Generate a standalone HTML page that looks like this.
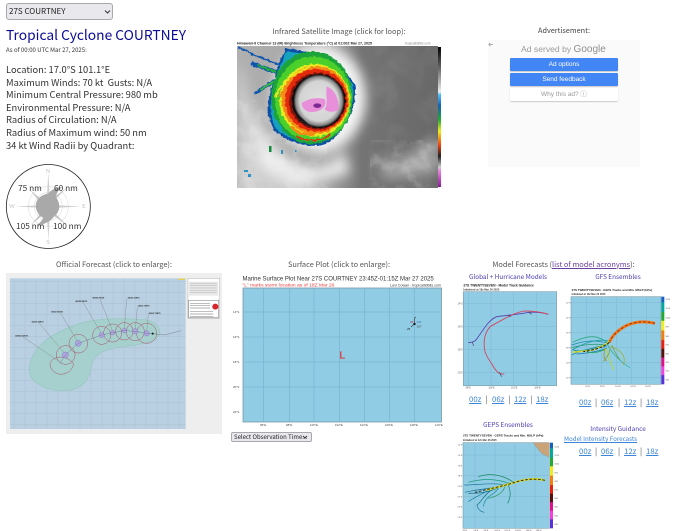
<!DOCTYPE html>
<html lang="en"><head><meta charset="utf-8"><title>Tropical Cyclone COURTNEY</title>
<style>
html,body{margin:0;padding:0;background:#fff;width:700px;height:531px;overflow:hidden}
#w{position:absolute;left:0;top:0;width:700px;height:531px;filter:blur(.3px);font-family:"Noto Sans CJK JP","Liberation Sans",sans-serif;color:#333}
.t{position:absolute;white-space:nowrap;line-height:1}
.c{transform:translateX(-50%)}
.h{font-size:7.400px;color:#555}
.m{font-size:6.400px;color:#4a3fb5}
a{color:#3d85d8;text-decoration:underline}
.l{font-size:7.800px;color:#3d85d8}
.sep{position:absolute;color:#555;font-size:7.800px;line-height:1}
svg{position:absolute;left:0;top:0;overflow:visible}
.box{position:absolute}
.info{position:absolute;left:6px;top:63px;font-size:9.350px;line-height:12.600px;color:#333;white-space:pre}
.btn{position:absolute;left:510px;width:108px;height:13px;border-radius:1px;font:6.500px/13px "Liberation Sans",sans-serif;text-align:center;box-shadow:0 1px 1px rgba(0,0,0,.2)}
select{position:absolute;appearance:none;-webkit-appearance:none;background:#e9e9ed;border:1px solid #a8a8ad;border-radius:3px;color:#222;padding:0 0 0 2px;margin:0;font-family:"Noto Sans CJK JP","Liberation Sans",sans-serif}
.n{font-size:8.300px;color:#333}
</style></head>
<body><div id="w">
<select style="left:6px;top:3px;width:107px;height:17px;font-size:8px"><option>27S COURTNEY</option></select>
<svg width="700" height="531" style="z-index:2;pointer-events:none"><path d="M105 10.500l2.500 2.500 2.500-2.500M303 436l2 2 2-2" fill="none" stroke="#333" stroke-width="1"/></svg>

<div class="t" style="left:6px;top:28px;font-size:13.800px;color:#0b0b96">Tropical Cyclone COURTNEY</div>
<div class="t" style="left:6px;top:47px;font-size:6px;color:#333">As of 00:00 UTC Mar 27, 2025:</div>
<div class="info">Location: 17.0°S 101.1°E
Maximum Winds: 70 kt  Gusts: N/A
Minimum Central Pressure: 980 mb
Environmental Pressure: N/A
Radius of Circulation: N/A
Radius of Maximum wind: 50 nm
34 kt Wind Radii by Quadrant:</div>

<!-- compass -->
<svg width="700" height="531">
 <g transform="translate(5,161.500) scale(.3333)">
  <g fill="none" stroke="#e2e2e2" stroke-width="2"><circle cx="130" cy="135" r="60"/><circle cx="130" cy="135" r="42"/></g>
  <g fill="#cfcfcf">
   <path d="M130 32l5 86h-10zM130 238l5-88h-10zM30 135l82-4v8zM230 135l-82-4v8z"/>
   <path d="M75 85l45 38-8 8zM185 80l-45 45-8-8zM78 190l40-48 8 8zM185 190l-45-44-6 8z" fill="#c4c4c4"/>
  </g>
  <path d="M130 96C140 84 152 78 172 76C162 84 156 92 152 106C166 122 168 150 148 164C138 178 124 188 94 192C108 182 114 174 114 168C92 158 86 126 100 112C108 102 120 98 130 96Z" fill="#a9a9a9"/>
  <circle cx="130" cy="135" r="126" fill="none" stroke="#222" stroke-width="2.400"/>
 </g>
 <g font-family="'Liberation Serif',serif" fill="#c0c0c0" font-size="6.500" text-anchor="middle">
  <text x="48" y="173">N</text><text x="48" y="244">S</text><text x="12" y="208">W</text><text x="84" y="208">E</text>
 </g>
</svg>
<div class="t n" style="left:18px;top:184px">75 nm</div>
<div class="t n" style="left:54px;top:184px">60 nm</div>
<div class="t n" style="left:16px;top:221.500px">105 nm</div>
<div class="t n" style="left:53px;top:221.500px">100 nm</div>

<!-- satellite -->
<div class="t h c" style="left:339px;top:27.500px">Infrared Satellite Image (click for loop):</div>
<svg width="700" height="531">
 <defs>
  <clipPath id="sc"><rect x="237" y="46" width="201" height="142"/></clipPath>
  <linearGradient id="sbg" x1="0" x2="1" y1="0" y2="0"><stop offset="0" stop-color="#b0b0b0"/><stop offset=".45" stop-color="#a4a4a4"/><stop offset=".62" stop-color="#747474"/><stop offset="1" stop-color="#686868"/></linearGradient>
  <linearGradient id="cb" x1="0" x2="0" y1="0" y2="1"><stop offset="0" stop-color="#000"/><stop offset=".15" stop-color="#666"/><stop offset=".32" stop-color="#eee"/><stop offset=".34" stop-color="#4fc3f7"/><stop offset=".42" stop-color="#1560b0"/><stop offset=".52" stop-color="#22aa33"/><stop offset=".6" stop-color="#eeee22"/><stop offset=".7" stop-color="#ee4411"/><stop offset=".78" stop-color="#222"/><stop offset=".86" stop-color="#ccc"/><stop offset=".88" stop-color="#ee88dd"/><stop offset="1" stop-color="#8a1a9a"/></linearGradient>
  <radialGradient id="disc"><stop offset="0" stop-color="#e0e0e0"/><stop offset=".76" stop-color="#d4d4d4"/><stop offset=".92" stop-color="#888"/><stop offset="1" stop-color="#1a1a1a"/></radialGradient>
  <filter id="noise" x="0" y="0" width="100%" height="100%"><feTurbulence type="fractalNoise" baseFrequency=".07" numOctaves="4" seed="7"/><feColorMatrix values="0 0 0 0 1  0 0 0 0 1  0 0 0 0 1  3 0 0 0 -1.300"/></filter>
  <filter id="dark" x="0" y="0" width="100%" height="100%"><feTurbulence type="fractalNoise" baseFrequency=".04" numOctaves="3" seed="3"/><feColorMatrix values="0 0 0 0 .3  0 0 0 0 .3  0 0 0 0 .3  3 0 0 0 -1.300"/></filter>
  <filter id="jag" x="-10%" y="-10%" width="120%" height="120%"><feTurbulence type="fractalNoise" baseFrequency=".3" numOctaves="2" seed="11" result="n"/><feDisplacementMap in="SourceGraphic" in2="n" scale="3.500" xChannelSelector="R" yChannelSelector="G"/><feGaussianBlur stdDeviation=".3"/></filter>
  <filter id="b4"><feGaussianBlur stdDeviation="6"/></filter>
  <path id="bd" d="M165 25C260 30 350 80 375 135C385 200 345 270 300 305C250 330 190 315 135 275C105 230 110 170 135 115C140 70 160 50 165 25Z"/>
 </defs>
 <g clip-path="url(#sc)">
  <rect x="237" y="46" width="201" height="142" fill="url(#sbg)"/>
  <g filter="url(#b4)">
   <g transform="translate(230,40) scale(.3333)">
    <ellipse cx="268" cy="175" rx="140" ry="160" fill="#f4f4f4"/>
    <path d="M20 60C70 160 50 300 130 400L310 460H20Z" fill="#cfcfcf"/>
    <path d="M60 170C90 260 120 330 200 370C260 390 300 390 340 330L360 400L200 440L90 380Z" fill="#ececec"/>
    <path d="M440 385C500 360 580 320 625 290V400L470 420Z" fill="#a4a4a4"/>
   </g>
  </g>
  <rect x="368" y="46" width="70" height="142" filter="url(#dark)" opacity=".22"/>
  <rect x="237" y="100" width="90" height="88" filter="url(#noise)" opacity=".22"/>
  <rect x="370" y="140" width="68" height="48" filter="url(#noise)" opacity=".2"/>
  <g filter="url(#jag)">
   <g transform="translate(230,40) scale(.3333)" fill="none" stroke-linecap="round">
    <path d="M27 23L80 48L150 75" stroke="#0d55ad" stroke-width="6"/>
    <path d="M68 72L140 96" stroke="#0d55ad" stroke-width="12"/><path d="M85 77L140 96" stroke="#27b03a" stroke-width="6"/>
    <path d="M78 158L135 122" stroke="#0d55ad" stroke-width="11"/><path d="M95 147L135 122" stroke="#3cc42e" stroke-width="6"/>
    <use href="#bd" fill="#0c4fa5"/>
    <path d="M168 35C260 40 345 85 369 138C378 200 340 265 296 298C250 322 195 308 141 270C113 228 118 172 141 118C146 75 162 58 168 35Z" fill="#15a2bf"/>
    <ellipse cx="246" cy="173" rx="122" ry="139" fill="#1ca33a"/>
    <ellipse cx="250" cy="177" rx="115" ry="128" fill="#4ccf2a"/>
    <ellipse cx="254" cy="181" rx="106" ry="109" fill="#e8ea20"/>
    <ellipse cx="256" cy="180" rx="101" ry="102" fill="#f28c18"/>
    <path d="M135 172C150 130 190 100 240 82" stroke="#e8ea20" stroke-width="5"/>
    <path d="M150 170C165 135 195 112 235 96" stroke="#f28c18" stroke-width="5"/>
    <ellipse cx="259" cy="181" rx="94" ry="94" fill="#e42a10"/>
    <path d="M200 288C230 306 270 306 300 284" stroke="#e42a10" stroke-width="5"/>
    <path d="M185 262C205 282 225 285 250 282" stroke="#f28c18" stroke-width="9"/>
    <ellipse cx="263" cy="183" rx="85" ry="85" fill="#7a1208"/>
    <ellipse cx="266" cy="183" rx="80" ry="81" fill="#111"/>
   </g>
  </g>
  <g transform="translate(230,40) scale(.3333)" style="filter:blur(.4px)">
   <ellipse cx="267" cy="183" rx="76" ry="79" fill="url(#disc)"/>
   <path d="M195 205C205 230 225 238 236 255C222 258 205 240 195 205Z" fill="#1c1c1c"/>
   <path d="M290 140C312 145 330 180 325 210C310 218 292 216 284 208C296 190 286 165 290 140Z" fill="#e88fda"/>
   <path d="M215 190C232 176 262 170 285 178C292 200 272 216 244 216C228 216 216 204 215 190Z" fill="#e88fda"/>
   <ellipse cx="262" cy="197" rx="12" ry="7" fill="#7e2a92"/>
  </g>
  <g fill="#118a3a"><rect x="269" y="146" width="2.500" height="6"/></g>
  <g fill="#1a8fc4" opacity=".9"><rect x="244" y="170" width="4" height="2"/><rect x="248" y="174" width="3" height="3"/><rect x="281" y="150" width="2" height="4"/><rect x="295" y="150" width="1.500" height="2"/></g>
 </g>
 <rect x="438" y="47" width="3" height="140" fill="url(#cb)"/>
 <g font-family="'Liberation Sans',sans-serif" font-size="3.600" font-weight="700" fill="#222"><text x="237" y="44.300">Himawari-9 Channel 13 (IR) Brightness Temperature (°C) at 01:00Z Mar 27, 2025</text></g>
 <text x="405" y="44.300" font-family="'Liberation Sans',sans-serif" font-size="3.200" fill="#888">tropicaltidbits.com</text>
</svg>

<!-- ad -->
<div class="t h c" style="left:564px;top:27.500px;color:#444;font-size:7.300px">Advertisement:</div>
<div class="box" style="left:488px;top:40px;width:152px;height:127px;background:#fafafa"></div>
<svg width="700" height="531"><path d="M493 44.500h-4M490.500 42.800l-1.700 1.700 1.700 1.700" fill="none" stroke="#999" stroke-width=".7"/></svg>
<div class="t" style="left:521px;top:44px;font:8.600px 'Liberation Sans',sans-serif;color:#9b9b9b">Ad served by <span style="font-size:10px;color:#8f8f8f">Google</span></div>
<div class="btn" style="top:57.500px;background:#4285f4;color:#fff">Ad options</div>
<div class="btn" style="top:72.500px;background:#4285f4;color:#fff">Send feedback</div>
<div class="btn" style="top:87.500px;background:#fff;color:#999">Why this ad? ⓘ</div>

<!-- official forecast -->
<div class="t h c" style="left:114px;top:260.500px">Official Forecast (click to enlarge):</div>
<svg width="700" height="531">
 <rect x="6" y="273" width="216" height="161" fill="#eeeeee"/>
 <g transform="translate(0,255) scale(.3333)">
  <rect x="30" y="70" width="527" height="452" fill="#b9d0e2"/>
  <g stroke="#8fa2b2" stroke-width="1.300" opacity=".35">
   <path d="M42 70V522M75 70V522M108 70V522M141 70V522M174 70V522M207 70V522M240 70V522M273 70V522M306 70V522M339 70V522M372 70V522M405 70V522M438 70V522M471 70V522M504 70V522M537 70V522"/>
   <path d="M30 80H557M30 113H557M30 146H557M30 179H557M30 212H557M30 245H557M30 278H557M30 311H557M30 344H557M30 377H557M30 410H557M30 443H557M30 476H557M30 509H557"/>
  </g>
  <path d="M480 235C478 205 455 195 420 193C370 190 310 190 270 198C225 208 175 225 130 262C95 295 80 330 92 365C115 400 165 412 210 406C255 396 272 365 275 330C280 300 310 285 350 278C400 270 470 268 480 235Z" fill="#a6d0cd" stroke="#97c6c2" stroke-width="2"/>
  <g fill="none" stroke="#a84f64" stroke-width="1.500">
   <circle cx="440" cy="235" r="30"/><circle cx="406" cy="230" r="27"/><circle cx="373" cy="229" r="26"/><circle cx="338" cy="234" r="27"/><circle cx="305" cy="241" r="27"/>
   <circle cx="235" cy="266" r="28"/><circle cx="197" cy="300" r="28"/><path d="M150 325C160 300 200 300 220 325C220 345 200 358 180 358C165 355 150 345 150 325Z"/>
  </g>
  <g fill="#b0a6de" stroke="#7a6dc8" stroke-width="1.200"><circle cx="440" cy="235" r="8"/><circle cx="406" cy="229" r="8"/><circle cx="373" cy="227" r="7"/><circle cx="338" cy="233" r="7"/><circle cx="305" cy="240" r="8"/><circle cx="235" cy="265" r="9"/><circle cx="196" cy="300" r="9"/></g>
  <path d="M544 227L495 240L458 236L440 235L406 229L373 227L338 233L305 240L235 265L196 300L180 325" fill="none" stroke="#667" stroke-width="1.100"/>
  <g stroke="#777" stroke-width="1" fill="none"><path d="M445 180L440 228M412 157L406 222M380 132L373 220M300 133L337 226M248 140L303 233M180 172L232 258M118 205L192 293M68 245L178 320"/></g>
  <g font-family="'Liberation Sans',sans-serif" font-size="5.500" fill="#222" font-weight="700">
   <text x="446" y="177">00/00Z 70KTS</text><text x="413" y="155">12/06Z 70KTS</text><text x="383" y="130">24/18Z 75KTS</text><text x="277" y="130">36/06Z 70KTS</text><text x="226" y="141">48/18Z 65KTS</text><text x="153" y="172">72/00Z 55KTS</text><text x="95" y="203">96/00Z 45KTS</text><text x="45" y="244">120/00Z 35KTS</text>
  </g>
  <rect x="535" y="71" width="20" height="4" fill="#ead04a"/>
  <circle cx="458" cy="236" r="3" fill="#111"/>
  <rect x="564" y="70" width="95" height="120" fill="#fff" stroke="#888"/>
  <rect x="567" y="80" width="88" height="42" fill="#e8e8e8"/>
  <path d="M570 85H650M570 92H650M570 99H650M570 106H650M570 113H650" stroke="#aaa" stroke-width="1.300"/>
  <rect x="566" y="136" width="90" height="52" fill="#fff" stroke="#333"/>
  <circle cx="646" cy="155" r="9" fill="#d8262a"/>
  <path d="M570 145H630M570 152H630M570 159H630M570 170H640M570 177H640M570 184H640" stroke="#999" stroke-width="2"/>
 </g>
</svg>

<!-- surface -->
<div class="t h c" style="left:339px;top:260.500px">Surface Plot (click to enlarge):</div>
<svg width="700" height="531">
 <text x="242.500" y="280.300" font-family="'Liberation Sans',sans-serif" font-size="6" fill="#333">Marine Surface Plot Near 27S COURTNEY 23:45Z-01:15Z Mar 27 2025</text>
 <text x="242.500" y="286.500" font-family="'Liberation Sans',sans-serif" font-size="4.950" fill="#f03c3c">"L" marks storm location as of 18Z Mar 26</text>
 <text x="441" y="286.500" text-anchor="end" font-family="'Liberation Sans',sans-serif" font-size="3.600" fill="#333">Levi Cowan - tropicaltidbits.com</text>
 <rect x="243" y="288" width="198.500" height="134" fill="#90cce4" stroke="#7b98a8" stroke-width=".8"/>
 <g stroke="#7db7d2" stroke-width=".8"><path d="M263.500 288V422M289.500 288V422M314 288V422M339.500 288V422M364.500 288V422M389.500 288V422M414.500 288V422"/><path d="M243 312H441M243 337H441M243 362H441M243 387H441"/></g>
 <g font-family="'Liberation Sans',sans-serif" font-size="2.900" fill="#444">
  <text x="233" y="313">14°S</text><text x="233" y="338">16°S</text><text x="233" y="363">18°S</text><text x="233" y="388">20°S</text><text x="233" y="413">22°S</text>
  <text x="260" y="426">96°E</text><text x="286" y="426">98°E</text><text x="310" y="426">100°E</text><text x="335" y="426">102°E</text><text x="360" y="426">104°E</text><text x="385" y="426">106°E</text><text x="410" y="426">108°E</text><text x="435" y="426">110°E</text>
 </g>
 <text x="339.500" y="358.500" font-family="'Liberation Sans',sans-serif" font-size="10" fill="#e0383c" stroke="#e0383c" stroke-width=".3">L</text>
 <path d="M414.500 324L414.500 318M414.500 324L411 327M414.500 318l1.500-1" stroke="#333" stroke-width=".6" fill="none"/>
 <rect x="413.500" y="323" width="2" height="2" fill="#111"/>
 <g font-family="'Liberation Sans',sans-serif" font-size="3"><text x="416.500" y="323" fill="#3a6fc0">101</text><text x="416.500" y="327.500" fill="#444">107</text><text x="410" y="323" fill="#b03050">28</text><text x="407" y="330" fill="#222">25</text></g>
</svg>
<select style="left:231px;top:432px;width:81px;height:10px;font-size:6px;line-height:8px;border-radius:2px"><option>Select Observation Time...</option></select>

<!-- model section -->
<div class="t h c" style="left:563.500px;top:260.500px">Model Forecasts (<a href="#" style="color:#6b3fa0">list of model acronyms</a>):</div>
<div class="t m c" style="left:508px;top:274px">Global + Hurricane Models</div>
<div class="t m c" style="left:618px;top:274px">GFS Ensembles</div>
<div class="t m c" style="left:508px;top:422px">GEPS Ensembles</div>
<div class="t m c" style="left:618px;top:426px">Intensity Guidance</div>
<div class="t" style="left:564px;top:436px;font-size:6.200px"><a href="#">Model Intensity Forecasts</a></div>

<svg width="700" height="531" font-family="'Liberation Sans',sans-serif">
 <defs>
  <linearGradient id="mc" x1="0" x2="0" y1="0" y2="1">
   <stop offset="0" stop-color="#1560c0"/><stop offset=".06" stop-color="#1560c0"/><stop offset=".07" stop-color="#00a8a0"/><stop offset=".17" stop-color="#00a8a0"/><stop offset=".18" stop-color="#22aa33"/><stop offset=".27" stop-color="#22aa33"/><stop offset=".28" stop-color="#eeee22"/><stop offset=".38" stop-color="#eeee22"/><stop offset=".39" stop-color="#f08010"/><stop offset=".49" stop-color="#f08010"/><stop offset=".5" stop-color="#e82010"/><stop offset=".59" stop-color="#e82010"/><stop offset=".6" stop-color="#5a0f0f"/><stop offset=".69" stop-color="#5a0f0f"/><stop offset=".7" stop-color="#e0108a"/><stop offset=".79" stop-color="#e0108a"/><stop offset=".8" stop-color="#f040e0"/><stop offset=".89" stop-color="#f040e0"/><stop offset=".9" stop-color="#5a30d8"/><stop offset="1" stop-color="#5a30d8"/>
  </linearGradient>
 </defs>
 <!-- global -->
 <g transform="translate(455,255) scale(.3333)">
  <rect x="25" y="110" width="280" height="282" fill="#90cce4" stroke="#6e8c9a" stroke-width="1.500"/>
  <g stroke="#7db7d2" stroke-width="1.500"><path d="M40 110V392M108 110V392M176 110V392M244 110V392M25 145H305M25 215H305M25 284H305M25 353H305"/></g>
  <path d="M280 178C260 172 240 171 222 172C190 178 165 180 125 185C100 195 85 225 70 245C62 258 58 262 40 263" fill="none" stroke="#5a3fb0" stroke-width="2.600"/>
  <path d="M280 178C255 170 232 168 208 168C180 172 150 190 105 215C88 235 84 262 90 290C100 318 112 325 115 335C125 350 130 358 148 357" fill="none" stroke="#d8405a" stroke-width="2.600"/>
  <path d="M52 262L56 273M133 352L140 365M158 180L168 186M222 172L230 178" stroke="#446" stroke-width="2"/>
  <text x="25" y="95" font-size="10" font-weight="700" fill="#222">27S TWENTYSEVEN - Model Track Guidance</text>
  <text x="25" y="107" font-size="8" font-weight="700" fill="#333">Initialized at 18z Mar 26 2025</text>
  <g font-size="7" fill="#555"><text x="32" y="400">98°E</text><text x="100" y="400">100°E</text><text x="168" y="400">102°E</text><text x="238" y="400">104°E</text><text x="8" y="148">14°S</text><text x="8" y="218">16°S</text><text x="8" y="287">18°S</text><text x="8" y="356">20°S</text></g>
 </g>
 <!-- GFS -->
 <g transform="translate(560,255) scale(.3333)">
  <rect x="33" y="125" width="270" height="263" fill="#90cce4" stroke="#6e8c9a" stroke-width="1.500"/>
  <g stroke="#7db7d2" stroke-width="1.500"><path d="M80 125V388M125 125V388M170 125V388M215 125V388M260 125V388M33 143H303M33 188H303M33 233H303M33 278H303M33 323H303M33 368H303"/></g>
  <g fill="none" stroke-width="2.400">
   <path d="M145 265C115 240 85 238 38 262" stroke="#2aa880"/><path d="M145 265C110 255 80 255 35 270" stroke="#1b8fa8"/><path d="M145 270C105 265 70 268 35 278" stroke="#2a9a70"/><path d="M140 275C100 280 70 282 35 300" stroke="#2196c0"/><path d="M140 280C105 292 80 295 50 297" stroke="#1a7ab0"/><path d="M140 280C115 295 95 295 80 290" stroke="#2aa860"/>
   <path d="M145 258C115 250 75 262 36 285" stroke="#1f9aa0"/><path d="M130 272C100 275 70 295 40 285" stroke="#1c8a90"/>
   <path d="M140 262C150 290 180 320 210 338" stroke="#35b0a0"/><path d="M135 280C145 300 155 330 160 345" stroke="#c9d820"/><path d="M150 275C190 285 198 310 190 330" stroke="#a0b030"/><path d="M135 280C130 300 130 310 140 318" stroke="#b09020"/><path d="M155 270C165 295 170 300 180 315" stroke="#70a040"/><path d="M150 280C150 300 135 310 130 320" stroke="#88a030"/>
  </g>
  <path d="M285 205C255 198 225 198 195 214C170 228 155 245 148 262" fill="none" stroke="#f07a1a" stroke-width="9"/>
  <path d="M285 205C255 198 225 198 195 214C170 228 155 245 148 262" fill="none" stroke="#a03010" stroke-width="3" stroke-dasharray="8 6"/>
  <path d="M148 258C138 272 118 275 100 285C75 288 55 290 38 292" fill="none" stroke="#d8d820" stroke-width="4"/>
  <path d="M148 262C130 278 100 285 70 290" fill="none" stroke="#222" stroke-width="3" stroke-dasharray="8 5"/>
  <rect x="304" y="125" width="9" height="263" fill="url(#mc)"/>
  <text x="35" y="108" font-size="9" font-weight="700" fill="#222">27S TWENTYSEVEN - GEFS Tracks and Min. MSLP (hPa)</text>
  <text x="35" y="120" font-size="7.500" font-weight="700" fill="#333">Initialized at 18z Mar 26 2025</text>
  <g font-size="6.500" fill="#555"><text x="76" y="396">96°E</text><text x="120" y="396">98°E</text><text x="165" y="396">100°E</text><text x="210" y="396">102°E</text><text x="255" y="396">104°E</text><text x="18" y="146">12°S</text><text x="18" y="191">14°S</text><text x="18" y="236">16°S</text><text x="18" y="281">18°S</text><text x="18" y="326">20°S</text><text x="18" y="371">22°S</text>
  <text x="316" y="135">1020</text><text x="316" y="162">1010</text><text x="316" y="190">1000</text><text x="316" y="218">990</text><text x="316" y="246">980</text><text x="316" y="272">970</text><text x="316" y="298">960</text><text x="316" y="324">950</text><text x="316" y="350">940</text><text x="316" y="376">930</text></g>
 </g>
 <!-- GEPS -->
 <g transform="translate(455,405) scale(.3333)">
  <rect x="24" y="113" width="259" height="257" fill="#90cce4" stroke="#6e8c9a" stroke-width="1.500"/>
  <g stroke="#7db7d2" stroke-width="1.500"><path d="M60 113V370M120 113V370M180 113V370M240 113V370M24 150H283M24 212H283M24 274H283M24 336H283"/></g>
  <path d="M235 113H283V157C270 150 262 148 255 140C248 130 240 122 235 113Z" fill="#c9a478" stroke="#888"/>
  <g fill="none" stroke-width="2.200">
   <path d="M180 235C140 205 100 205 70 215" stroke="#1f8a60"/><path d="M170 238C130 222 90 218 40 232" stroke="#1a9a80"/><path d="M150 240C110 232 70 240 28 240" stroke="#1a7aa0"/><path d="M140 245C100 250 60 255 30 262" stroke="#1a6f90"/><path d="M110 255C90 265 80 290 66 300C68 310 75 320 88 322" stroke="#1a6f90"/><path d="M130 250C120 270 90 270 85 305" stroke="#2090a0"/><path d="M160 240C170 265 165 280 158 295" stroke="#1a8a70"/><path d="M150 245C140 270 120 275 100 280" stroke="#2a9a60"/><path d="M130 248C100 262 75 265 40 265" stroke="#1a7080"/><path d="M100 255C80 270 60 275 40 290" stroke="#1a80a0"/>
  </g>
  <path d="M270 226C240 218 210 222 180 232C155 240 120 248 95 255" fill="none" stroke="#d8d820" stroke-width="6"/>
  <path d="M270 226C240 220 210 222 180 232C150 242 100 252 60 262" fill="none" stroke="#222" stroke-width="2.600" stroke-dasharray="8 5"/>
  <rect x="285" y="113" width="9" height="257" fill="url(#mc)"/>
  <text x="24" y="95" font-size="9" font-weight="700" fill="#222">27S TWENTYSEVEN - GEPS Tracks and Min. MSLP (hPa)</text>
  <text x="24" y="108" font-size="7.500" font-weight="700" fill="#333">Initialized at 12z Mar 26 2025</text>
  <g font-size="6.500" fill="#555"><text x="22" y="378">94°E</text><text x="56" y="378">96°E</text><text x="86" y="378">98°E</text><text x="118" y="378">100°E</text><text x="148" y="378">102°E</text><text x="180" y="378">104°E</text><text x="212" y="378">106°E</text><text x="242" y="378">108°E</text><text x="8" y="121">12°S</text><text x="8" y="153">14°S</text><text x="8" y="184">16°S</text><text x="8" y="215">18°S</text><text x="8" y="246">20°S</text><text x="8" y="277">22°S</text><text x="8" y="308">24°S</text><text x="8" y="339">26°S</text>
  <text x="298" y="127">1020</text><text x="298" y="153">1010</text><text x="298" y="179">1000</text><text x="298" y="205">990</text><text x="298" y="231">980</text><text x="298" y="256">970</text><text x="298" y="282">960</text><text x="298" y="308">950</text><text x="298" y="334">940</text><text x="298" y="360">930</text></g>
 </g>
</svg>

<!-- link rows -->
<div class="t l" style="left:469px;top:395.500px"><a href="#">00z</a></div><div class="sep" style="left:485.500px;top:395.500px">|</div>
<div class="t l" style="left:492px;top:395.500px"><a href="#">06z</a></div><div class="sep" style="left:508.500px;top:395.500px">|</div>
<div class="t l" style="left:514px;top:395.500px"><a href="#">12z</a></div><div class="sep" style="left:530.500px;top:395.500px">|</div>
<div class="t l" style="left:536px;top:395.500px"><a href="#">18z</a></div>

<div class="t l" style="left:579px;top:399px"><a href="#">00z</a></div><div class="sep" style="left:595px;top:399px">|</div>
<div class="t l" style="left:601px;top:399px"><a href="#">06z</a></div><div class="sep" style="left:618px;top:399px">|</div>
<div class="t l" style="left:624px;top:399px"><a href="#">12z</a></div><div class="sep" style="left:640px;top:399px">|</div>
<div class="t l" style="left:646px;top:399px"><a href="#">18z</a></div>

<div class="t l" style="left:579px;top:448px"><a href="#">00z</a></div><div class="sep" style="left:595px;top:448px">|</div>
<div class="t l" style="left:601px;top:448px"><a href="#">06z</a></div><div class="sep" style="left:618px;top:448px">|</div>
<div class="t l" style="left:624px;top:448px"><a href="#">12z</a></div><div class="sep" style="left:640px;top:448px">|</div>
<div class="t l" style="left:646px;top:448px"><a href="#">18z</a></div>
</div></body></html>
